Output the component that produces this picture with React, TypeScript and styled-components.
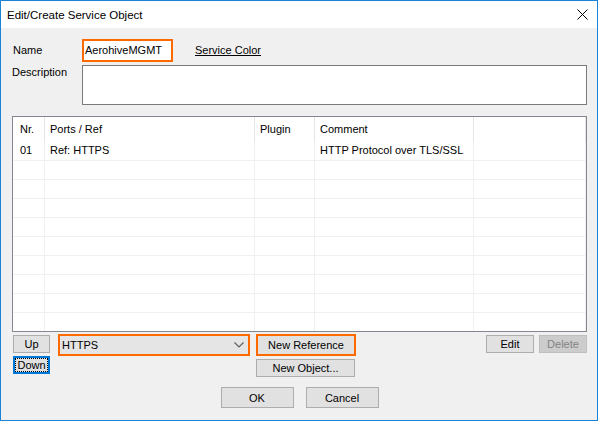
import styled, { createGlobalStyle } from "styled-components";

const GlobalStyle = createGlobalStyle`
  html, body {
    margin: 0;
    padding: 0;
    background: #ffffff;
  }
  body {
    font-family: "Liberation Sans", Arial, sans-serif;
    font-size: 11px;
    color: #000;
  }
`;

const Window = styled.div`
  width: 598px;
  height: 421px;
  box-sizing: border-box;
  border: 1px solid #1883d7;
  display: flex;
  flex-direction: column;
  background: #f0f0f0;
`;

const TitleBar = styled.div`
  height: 27px;
  background: #fff;
  display: flex;
  align-items: center;
  justify-content: space-between;
  padding: 0 9px 0 6px;
  flex-shrink: 0;
`;

const Title = styled.span`
  font-size: 11.5px;
  line-height: 14px;
`;

const Body = styled.div`
  flex: 1;
  padding: 11px 10px 0 11px;
  display: flex;
  flex-direction: column;
`;

const FieldRow = styled.div<{ $top?: number }>`
  display: flex;
  align-items: flex-start;
  margin-top: ${(p) => p.$top ?? 0}px;
`;

const Label = styled.div<{ $pad?: number; $height?: number }>`
  width: 70px;
  padding-left: ${(p) => p.$pad ?? 0}px;
  box-sizing: border-box;
  line-height: ${(p) => p.$height ?? 14}px;
`;

const NameBox = styled.div`
  width: 91px;
  height: 23px;
  box-sizing: border-box;
  border: 2px solid #ff6a00;
  background: #fff;
  padding-left: 1px;
  line-height: 19px;
`;

const LinkText = styled.span`
  margin-left: 22px;
  text-decoration: underline;
  line-height: 23px;
`;

const DescBox = styled.div`
  flex: 1;
  height: 40px;
  box-sizing: border-box;
  border: 1px solid #7a7a7a;
  background: #fff;
`;

const ListView = styled.div`
  margin-top: 11px;
  height: 216px;
  box-sizing: border-box;
  border: 1px solid #828790;
  background: #fff;
  overflow: hidden;
`;

const Grid = styled.div`
  display: grid;
  grid-template-columns: 32px 210px 60px 159px 1fr;
`;

const HeadCell = styled.div<{ $pad?: number }>`
  height: 25px;
  line-height: 25px;
  padding-left: ${(p) => p.$pad ?? 5}px;
  box-sizing: border-box;
  border-right: 1px solid #e5e5e5;
  white-space: nowrap;
`;

const Cell = styled.div<{ $pad?: number }>`
  height: 19px;
  line-height: 17px;
  padding-left: ${(p) => p.$pad ?? 5}px;
  box-sizing: border-box;
  border-right: 1px solid #f0f0f0;
  border-bottom: 1px solid #f0f0f0;
  white-space: nowrap;
`;

const Controls = styled.div`
  margin-top: 2px;
  display: flex;
  align-items: flex-start;
`;

const Column = styled.div<{ $left?: number; $top?: number; $gap?: number }>`
  display: flex;
  flex-direction: column;
  gap: ${(p) => p.$gap ?? 3}px;
  margin-left: ${(p) => p.$left ?? 0}px;
  margin-top: ${(p) => p.$top ?? 0}px;
`;

const Button = styled.div<{
  $w: number;
  $h?: number;
  $left?: number;
  $top?: number;
  $highlight?: boolean;
  $focus?: boolean;
  $disabled?: boolean;
}>`
  width: ${(p) => p.$w}px;
  height: ${(p) => p.$h ?? 18}px;
  margin-left: ${(p) => p.$left ?? 0}px;
  margin-top: ${(p) => p.$top ?? 0}px;
  box-sizing: border-box;
  display: flex;
  align-items: center;
  justify-content: center;
  background: ${(p) => (p.$disabled ? "#cccccc" : "#e1e1e1")};
  color: ${(p) => (p.$disabled ? "#838383" : "#000")};
  border: ${(p) =>
    p.$highlight
      ? "2px solid #ff6a00"
      : p.$focus
      ? "2px solid #0078d7"
      : p.$disabled
      ? "1px solid #bfbfbf"
      : "1px solid #adadad"};
  outline: ${(p) => (p.$focus ? "1px dotted #000" : "none")};
  outline-offset: -3px;
  white-space: nowrap;
  flex-shrink: 0;
`;

const Combo = styled.div`
  width: 192px;
  height: 22px;
  margin-left: 8px;
  box-sizing: border-box;
  border: 2px solid #ff6a00;
  background: #e5e5e5;
  display: flex;
  align-items: center;
  justify-content: space-between;
  padding: 0 4px 0 2px;
`;

const Spacer = styled.div`
  flex: 1;
`;

const Footer = styled.div`
  margin-top: 10px;
  display: flex;
  justify-content: center;
  gap: 12px;
`;

const cols = [
  { pad: 7 },
  { pad: 5 },
  { pad: 5 },
  { pad: 5 },
  { pad: 5 },
];

const headers = ["Nr.", "Ports / Ref", "Plugin", "Comment", ""];
const rows: string[][] = [
  ["01", "Ref: HTTPS", "", "HTTP Protocol over TLS/SSL", ""],
  ...Array.from({ length: 9 }, () => ["", "", "", "", ""]),
];

export default function App() {
  return (
    <>
      <GlobalStyle />
      <Window>
        <TitleBar>
          <Title>Edit/Create Service Object</Title>
          <svg width="11" height="11" viewBox="0 0 11 11">
            <path d="M0.5 0.5 L10.5 10.5 M10.5 0.5 L0.5 10.5" stroke="#000" strokeWidth="1" />
          </svg>
        </TitleBar>
        <Body>
          <FieldRow>
            <Label $pad={1} $height={23}>
              Name
            </Label>
            <NameBox>AerohiveMGMT</NameBox>
            <LinkText>Service Color</LinkText>
          </FieldRow>
          <FieldRow $top={3}>
            <Label $height={14}>Description</Label>
            <DescBox />
          </FieldRow>
          <ListView>
            <Grid>
              {headers.map((h, i) => (
                <HeadCell key={i} $pad={cols[i].pad}>
                  {h}
                </HeadCell>
              ))}
              {rows.map((r, ri) =>
                r.map((c, ci) => (
                  <Cell key={`${ri}-${ci}`} $pad={cols[ci].pad}>
                    {c}
                  </Cell>
                ))
              )}
            </Grid>
          </ListView>
          <Controls>
            <Column $left={1} $top={1}>
              <Button $w={37}>Up</Button>
              <Button $w={37} $focus>
                Down
              </Button>
            </Column>
            <Combo>
              <span>HTTPS</span>
              <svg width="10" height="6" viewBox="0 0 10 6">
                <path d="M0.5 0.5 L5 5 L9.5 0.5" fill="none" stroke="#606060" strokeWidth="1.2" />
              </svg>
            </Combo>
            <Column $left={6}>
              <Button $w={100} $h={22} $highlight>
                New Reference
              </Button>
              <Button $w={99}>New Object...</Button>
            </Column>
            <Spacer />
            <Button $w={48} $top={1}>
              Edit
            </Button>
            <Button $w={48} $top={1} $left={5} $disabled>
              Delete
            </Button>
          </Controls>
          <Footer>
            <Button $w={73} $h={21}>
              OK
            </Button>
            <Button $w={73} $h={21}>
              Cancel
            </Button>
          </Footer>
        </Body>
      </Window>
    </>
  );
}
